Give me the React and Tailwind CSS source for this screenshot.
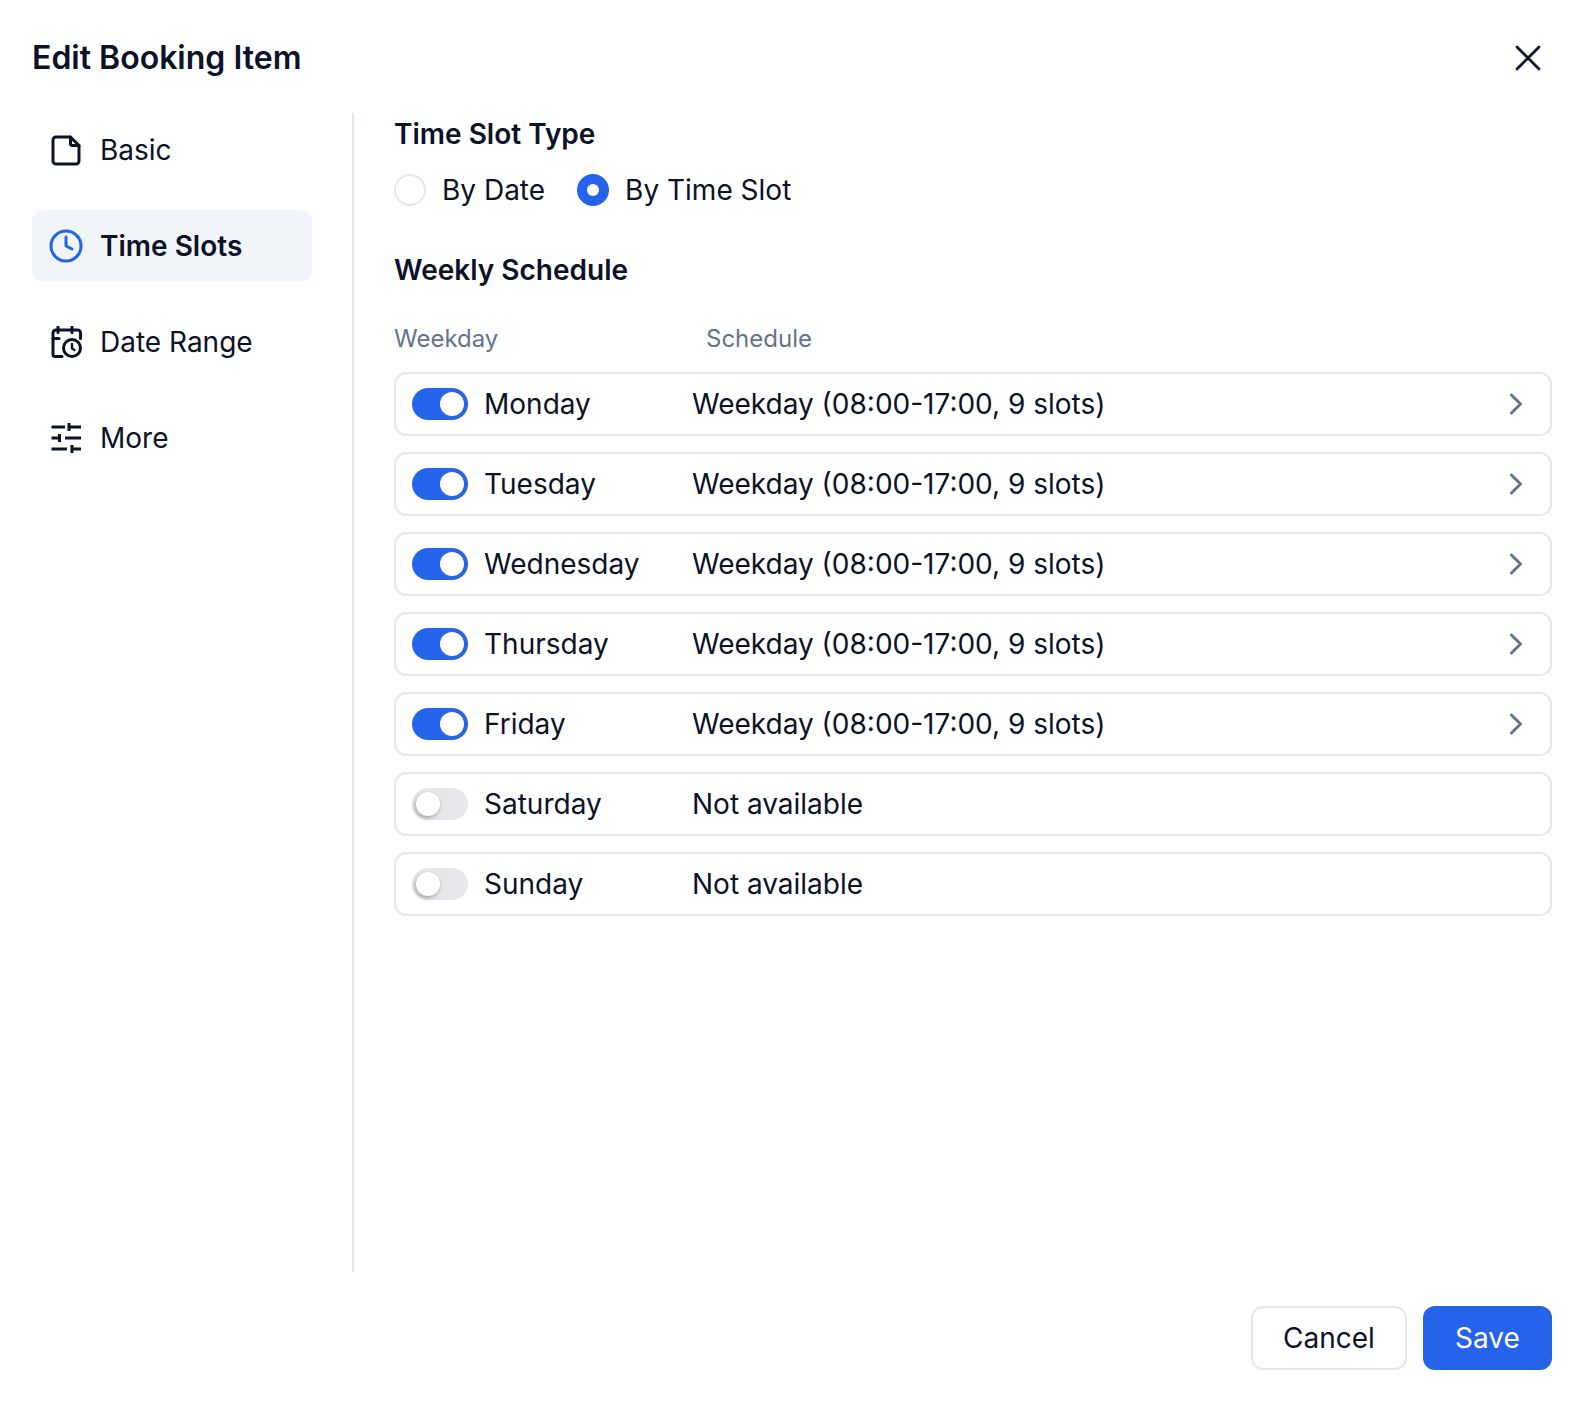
import React from 'react';
import { X, ChevronRight, Clock } from 'lucide-react';

const days = [
  { name: 'Monday', on: true },
  { name: 'Tuesday', on: true },
  { name: 'Wednesday', on: true },
  { name: 'Thursday', on: true },
  { name: 'Friday', on: true },
  { name: 'Saturday', on: false },
  { name: 'Sunday', on: false },
];

const FileIcon = () => (
  <svg width="32" height="32" viewBox="0 0 32 32" fill="none" stroke="currentColor" strokeWidth="3" strokeLinejoin="round" strokeLinecap="round">
    <path d="M6 3H20.5L29 11.5V27a3 3 0 0 1-3 3H6a3 3 0 0 1-3-3V6a3 3 0 0 1 3-3Z" />
    <path d="M20.5 3V9.5a2 2 0 0 0 2 2H29" />
  </svg>
);

const CalendarClockIcon = () => (
  <svg width="32" height="32" viewBox="0 0 32 32" fill="none" stroke="currentColor" strokeWidth="3" strokeLinejoin="round" strokeLinecap="round">
    <path d="M8 1V6.5M22 1V6.5M3 12.5H9" />
    <path d="M30.5 12.5V7a3 3 0 0 0-3-3H6a3 3 0 0 0-3 3v21.5a2 2 0 0 0 2 2h7" />
    <circle cx="22" cy="22" r="8.5" />
    <path d="M22 18v4.5l2.5 1.5" strokeWidth="2.4" />
  </svg>
);

const SlidersIcon = () => (
  <svg width="32" height="32" viewBox="0 0 32 32" fill="none" stroke="currentColor" strokeWidth="3">
    <path d="M1.5 5H15M19 5H31M19 1V9" />
    <path d="M1.5 16H9.5M9.5 12V20M15 16H31" />
    <path d="M1.5 27H17M22 27H31M22 23V31" />
  </svg>
);

const Toggle = ({ on }) => (
  <div className={`flex h-8 w-14 shrink-0 items-center rounded-full px-1 ${on ? 'justify-end bg-[#2563eb]' : 'justify-start bg-[#e5e7eb]'}`}>
    <div className={`h-6 w-6 rounded-full bg-white ${on ? '' : 'shadow-[-1px_2px_4px_rgba(0,0,0,0.3)]'}`} />
  </div>
);

const NavItem = ({ icon, label, active }) => (
  <div className={`flex h-[72px] items-center gap-[18px] rounded-xl pl-[18px] ${active ? 'bg-[#f1f5f9] font-semibold' : ''}`}>
    {icon}
    <span>{label}</span>
  </div>
);

export default function App() {
  return (
    <div className="flex h-[1402px] w-[1590px] flex-col bg-white font-['Inter',sans-serif] text-[#0c1228]">
      <div className="flex h-[113px] shrink-0 items-center justify-between pl-8 pr-10 pt-[2px]">
        <h1 className="text-[32px] font-semibold">Edit Booking Item</h1>
        <X size={44} strokeWidth={1.5} />
      </div>

      <div className="flex min-h-0 flex-1">
        <nav className="flex w-[354px] shrink-0 flex-col gap-6 border-r-2 border-[#e2e8f0] pl-8 pr-10 pt-px text-[28px]">
          <NavItem icon={<FileIcon />} label="Basic" />
          <NavItem icon={<Clock size={36} className="-mx-0.5 text-[#2563eb]" />} label="Time Slots" active />
          <NavItem icon={<CalendarClockIcon />} label="Date Range" />
          <NavItem icon={<SlidersIcon />} label="More" />
        </nav>

        <main className="flex-1 pl-10 pr-[38px] pt-px">
          <h2 className="text-[28px] font-semibold leading-10">Time Slot Type</h2>
          <div className="mt-[15px] flex items-center text-[28px]">
            <div className="h-8 w-8 rounded-full border-2 border-[#e5e7eb]" />
            <span className="ml-4">By Date</span>
            <div className="ml-8 flex h-8 w-8 items-center justify-center rounded-full bg-[#2563eb]">
              <div className="h-3 w-3 rounded-full bg-white" />
            </div>
            <span className="ml-4">By Time Slot</span>
          </div>

          <h2 className="mt-[39px] text-[28px] font-semibold leading-10">Weekly Schedule</h2>
          <div className="mt-[31px] flex text-[24px] leading-9 text-[#64748b]">
            <span className="w-[312px]">Weekday</span>
            <span>Schedule</span>
          </div>

          <div className="mt-[15px] flex flex-col gap-4 text-[28px]">
            {days.map((d) => (
              <div key={d.name} className="flex h-16 items-center rounded-xl border-2 border-[#e5e7eb] pl-4 pr-4">
                <Toggle on={d.on} />
                <span className="ml-4 w-[208px]">{d.name}</span>
                <span className="flex-1">{d.on ? 'Weekday (08:00-17:00, 9 slots)' : 'Not available'}</span>
                {d.on && <ChevronRight size={36} strokeWidth={2} className="text-[#64748b]" />}
              </div>
            ))}
          </div>
        </main>
      </div>

      <div className="flex h-[130px] shrink-0 items-center justify-end gap-4 pr-[38px] pt-[2px] text-[28px]">
        <button className="h-16 w-[156px] rounded-xl border-2 border-[#e5e7eb] bg-white">Cancel</button>
        <button className="h-16 w-[129px] rounded-xl bg-[#2563eb] text-white">Save</button>
      </div>
    </div>
  );
}
